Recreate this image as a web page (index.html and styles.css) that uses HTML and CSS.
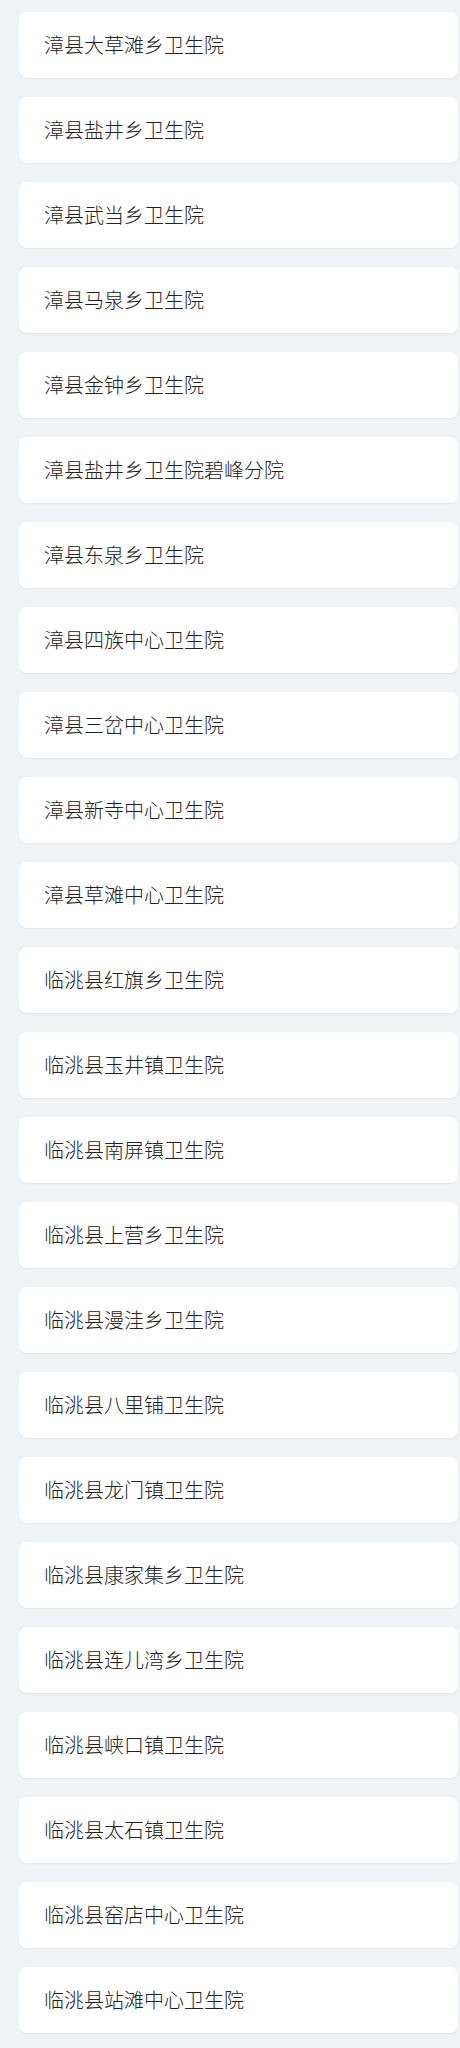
FILE: index.html
```html
<!DOCTYPE html>
<html lang="zh-CN">
<head>
<meta charset="utf-8">
<link rel="stylesheet" href="styles.css">
</head>
<body>
<div class="list">
  <div class="card">漳县大草滩乡卫生院</div>
  <div class="card">漳县盐井乡卫生院</div>
  <div class="card">漳县武当乡卫生院</div>
  <div class="card">漳县马泉乡卫生院</div>
  <div class="card">漳县金钟乡卫生院</div>
  <div class="card">漳县盐井乡卫生院碧峰分院</div>
  <div class="card">漳县东泉乡卫生院</div>
  <div class="card">漳县四族中心卫生院</div>
  <div class="card">漳县三岔中心卫生院</div>
  <div class="card">漳县新寺中心卫生院</div>
  <div class="card">漳县草滩中心卫生院</div>
  <div class="card">临洮县红旗乡卫生院</div>
  <div class="card">临洮县玉井镇卫生院</div>
  <div class="card">临洮县南屏镇卫生院</div>
  <div class="card">临洮县上营乡卫生院</div>
  <div class="card">临洮县漫洼乡卫生院</div>
  <div class="card">临洮县八里铺卫生院</div>
  <div class="card">临洮县龙门镇卫生院</div>
  <div class="card">临洮县康家集乡卫生院</div>
  <div class="card">临洮县连儿湾乡卫生院</div>
  <div class="card">临洮县峡口镇卫生院</div>
  <div class="card">临洮县太石镇卫生院</div>
  <div class="card">临洮县窑店中心卫生院</div>
  <div class="card">临洮县站滩中心卫生院</div>
</div>
</body>
</html>
```
FILE: styles.css
```css
html, body {
  margin: 0;
  padding: 0;
  background: #eff3f6;
}
body {
  font-family: "Noto Sans CJK SC", "Microsoft YaHei", sans-serif;
  color: #222222;
}
.list {
  display: flex;
  flex-direction: column;
  gap: 19px;
  padding: 12px 2px 12px 19px;
}
.card {
  background: #ffffff;
  height: 66px;
  border-radius: 8px;
  box-shadow: 0 1px 2px rgba(0, 0, 0, 0.06);
  display: flex;
  align-items: center;
  padding-left: 25px;
  font-size: 20px;
  font-weight: 300;
  line-height: 1;
  box-sizing: border-box;
}
```
